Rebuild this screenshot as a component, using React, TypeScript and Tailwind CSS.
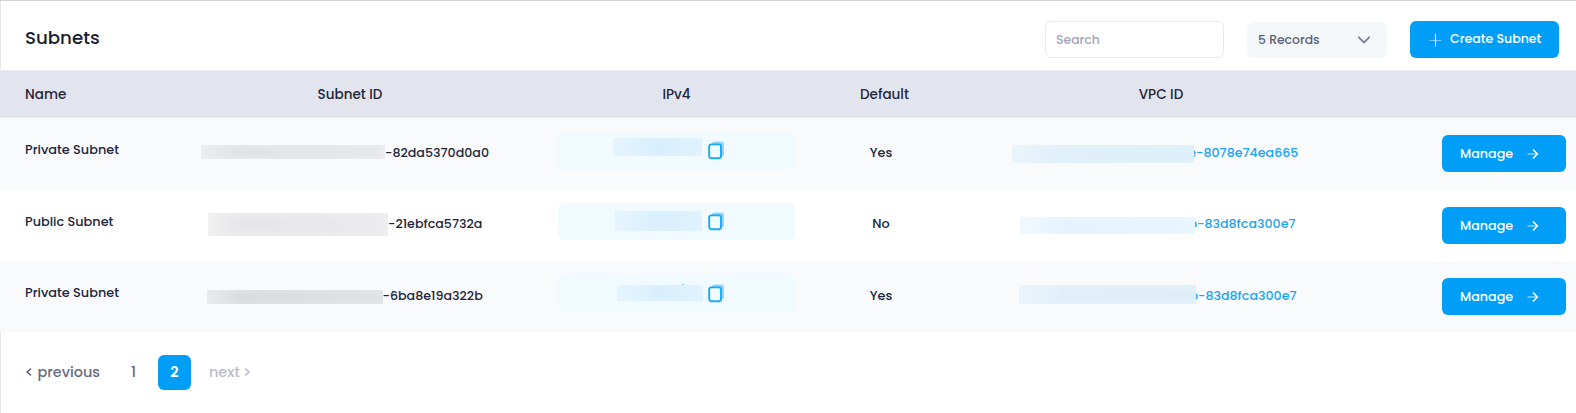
import React from "react";

type Mask = { bar: string; text: string; textClass: string };

type Row = {
  name: string;
  bg: string;
  height: string;
  subnet: Mask;
  ip: { box: string; bar: string; icon: string; dot?: boolean };
  isDefault: string;
  vpc: Mask & { clipped: string; cell: string };
  text: string;
  button: string;
};

const COLS = "grid grid-cols-[165px_370px_283px_133px_420px_1fr]";

const ROWS: Row[] = [
  {
    name: "Private Subnet",
    bg: "bg-[#f9fafc]",
    height: "h-[72px]",
    text: "mt-[25px]",
    subnet: {
      bar: "mt-[27px] h-[14px] w-[184px] from-[#ebecee] via-[#e0e1e5] to-[#e6e7ea] shadow-[inset_0_0_8px_#eeeff1]",
      text: "-82da5370d0a0",
      textClass: "w-[104px]",
    },
    ip: { box: "mt-[14px] h-[38px]", bar: "mt-[6px] h-[18px] w-[89px] ml-[55px]", icon: "mt-[9px] ml-[6px]" },
    isDefault: "Yes",
    vpc: {
      cell: "pr-[11px]",
      bar: "mt-[27px] h-[18px] w-[182px] from-[#edf5fb] via-[#dfeffa] to-[#dceef9] shadow-[inset_4px_0_8px_#e8f3fb]",
      clipped: "e",
      text: "-8078e74ea665",
      textClass: "w-[103px]",
    },
    button: "mt-[17px]",
  },
  {
    name: "Public Subnet",
    bg: "bg-white",
    height: "h-[71px]",
    text: "mt-[24px]",
    subnet: {
      bar: "mt-[23px] h-[23px] w-[180px] from-[#f0f0f1] via-[#e6e6e8] to-[#ebebed] shadow-[inset_0_0_10px_#f2f2f3]",
      text: "-21ebfca5732a",
      textClass: "w-[94px]",
    },
    ip: { box: "mt-[13px] h-[37px]", bar: "mt-[8px] h-[20px] w-[87px] ml-[57px]", icon: "mt-[9px] ml-[6px]" },
    isDefault: "No",
    vpc: {
      cell: "pr-[6px]",
      bar: "mt-[27px] h-[17px] w-[175px] from-[#f0f9ff] via-[#e3f3fe] to-[#e8f5fe] shadow-[inset_4px_0_8px_#eef8ff]",
      clipped: "b",
      text: "-83d8fca300e7",
      textClass: "w-[99px]",
    },
    button: "mt-[17px]",
  },
  {
    name: "Private Subnet",
    bg: "bg-[#f9fafc]",
    height: "h-[71px]",
    text: "mt-[25px]",
    subnet: {
      bar: "mt-[29px] h-[14px] w-[176px] from-[#ebecef] via-[#dadbdf] to-[#e1e2e6] shadow-[inset_0_0_6px_#e6e7ea]",
      text: "-6ba8e19a322b",
      textClass: "w-[101px]",
    },
    ip: { box: "mt-[13px] h-[38px]", bar: "mt-[11px] h-[16px] w-[86px] ml-[59px]", icon: "mt-[10px] ml-[5px]", dot: true },
    isDefault: "Yes",
    vpc: {
      cell: "pr-[6px]",
      bar: "mt-[24px] h-[19px] w-[177px] from-[#edf5fb] via-[#dfeffa] to-[#deeef9] shadow-[inset_4px_0_8px_#e8f3fb]",
      clipped: "b",
      text: "-83d8fca300e7",
      textClass: "w-[99px]",
    },
    button: "mt-[17px]",
  },
];

function CopyIcon({ className }: { className: string }) {
  return (
    <svg className={`h-[19px] w-[17px] shrink-0 ${className}`} viewBox="0 0 17 19" fill="none">
      <rect x="4" y="0.5" width="12" height="15" rx="2.8" fill="#93d5fb" />
      <rect x="1.200" y="3.400" width="11.800" height="13.800" rx="2.200" fill="#f1faff" stroke="#1ba8f8" strokeWidth="1.9" />
    </svg>
  );
}

function ManageButton({ className }: { className: string }) {
  return (
    <button className={`ml-[71px] flex h-[37px] w-[124px] items-center rounded-[6px] bg-[#009ef7] pl-[18px] text-[12.700px] font-medium text-white ${className}`}>
      <span className="w-[67px] text-left">Manage</span>
      <svg className="h-[12px] w-[12px]" viewBox="0 0 12 12" fill="none" stroke="white">
        <path d="M0.5 6h9" strokeOpacity="0.6" strokeWidth="1.3" />
        <path d="M6 1.5 10.3 6 6 10.5" strokeWidth="1.6" />
      </svg>
    </button>
  );
}

function SubnetRow({ row }: { row: Row }) {
  return (
    <div className={`${COLS} items-start ${row.bg} ${row.height}`}>
      <div className="pt-[22px] pl-[25px] leading-5">{row.name}</div>
      <div className="flex items-start justify-center pr-[10px]">
        <div className={`bg-linear-to-r via-20% ${row.subnet.bar}`} />
        <span className={`text-[12.650px] leading-5 whitespace-nowrap ${row.text} ${row.subnet.textClass}`}>{row.subnet.text}</span>
      </div>
      <div className={`ml-[23px] flex w-[237px] items-start rounded-[6px] bg-[#f1faff] ${row.ip.box}`}>
        <div className={`relative bg-linear-to-r from-[#e6f5fe] via-[#d7eefd] via-50% to-[#dff2fe] shadow-[inset_0_0_7px_#e2f3fe] ${row.ip.bar}`}>
          {row.ip.dot && <span className="absolute -top-px left-[65px] h-px w-[2px] bg-[#80c9f6]" />}
        </div>
        <CopyIcon className={row.ip.icon} />
      </div>
      <div className={`pr-[7px] text-center leading-5 ${row.text}`}>{row.isDefault}</div>
      <div className={`flex items-start justify-center text-[12.650px] text-[#1ba3f5] ${row.vpc.cell}`}>
        <div className={`relative z-10 bg-linear-to-r via-25% ${row.vpc.bar}`} />
        <span className={`-ml-[10px] flex w-[12px] justify-end leading-5 ${row.text}`}>{row.vpc.clipped}</span>
        <span className={`leading-5 whitespace-nowrap ${row.text} ${row.vpc.textClass}`}>{row.vpc.text}</span>
      </div>
      <ManageButton className={row.button} />
    </div>
  );
}

export default function App() {
  return (
    <main className="h-[413px] w-[1576px] overflow-hidden border-t border-[#d3d3d5] bg-white font-['Poppins','Inter',sans-serif] text-[12.850px] font-medium text-[#23263b] shadow-[inset_1px_0_0_#e9e9ec]">
      <header className="flex h-[69px] items-start pl-[25px]">
        <h1 className="mt-[23px] w-[1020px] text-[18.200px] leading-7 text-[#181c32]">Subnets</h1>
        <input
          className="mt-[20px] h-[37px] w-[179px] rounded-[6px] border border-[#e9eaf1] px-[10px] text-[12.400px] placeholder:text-[#a1a5b7]"
          placeholder="Search"
        />
        <div className="mt-[21px] ml-[23px] flex h-[36px] w-[140px] items-center justify-between rounded-[6px] bg-[#f5f8fa] pr-[16px] pl-[11px] text-[12.400px] text-[#5e6278]">
          <span>5 Records</span>
          <svg className="h-[14px] w-[14px]" viewBox="0 0 14 14" fill="none" stroke="#7e8299" strokeWidth="1.8">
            <path d="m1.8 4.300 5.200 5.200 5.200-5.200" strokeLinecap="round" strokeLinejoin="round" />
          </svg>
        </div>
        <button className="mt-[20px] ml-[23px] flex h-[37px] w-[149px] items-center gap-[8px] rounded-[6px] bg-[#009ef7] pl-[19px] text-[12.550px] font-medium whitespace-nowrap text-white">
          <svg className="h-[14px] w-[13px]" viewBox="0 0 13 14" fill="none" stroke="white">
            <path d="M6.500 0.500v13" strokeWidth="1.1" strokeOpacity="0.9" />
            <path d="M0.500 7.500h12" strokeOpacity="0.45" strokeWidth="1.1" />
          </svg>
          <span>Create Subnet</span>
        </button>
      </header>

      <section>
        <div className={`${COLS} h-[48px] items-center border-y border-[#ebecf2] bg-[#e3e5ee] pt-[2px] text-center text-[13.500px]`}>
          <div className="pl-[25px] text-left">Name</div>
          <div>Subnet ID</div>
          <div>IPv4</div>
          <div>Default</div>
          <div>VPC ID</div>
        </div>
        {ROWS.map((row, i) => (
          <SubnetRow key={i} row={row} />
        ))}
      </section>

      <nav className="mt-[23px] flex h-[35px] items-center pl-[25px] text-[14.400px] text-[#686b80]">
        <span className="flex w-[106px] items-center gap-[4.500px]">
          <svg className="h-[8px] w-[8px]" viewBox="0 0 8 8" fill="none" stroke="currentColor" strokeWidth="1.6">
            <path d="M6 .6 2.200 4 6 7.400" />
          </svg>
          previous
        </span>
        <span className="w-[27px]">1</span>
        <span className="flex h-[35px] w-[33px] items-center justify-center rounded-[6px] bg-[#009ef7] font-semibold text-white">2</span>
        <span className="ml-[18px] flex items-center gap-[4px] text-[#b9bbc8]">
          next
          <svg className="h-[8px] w-[8px]" viewBox="0 0 8 8" fill="none" stroke="currentColor" strokeWidth="1.6">
            <path d="M1.200 .6 5 4 1.200 7.400" />
          </svg>
        </span>
      </nav>
    </main>
  );
}
